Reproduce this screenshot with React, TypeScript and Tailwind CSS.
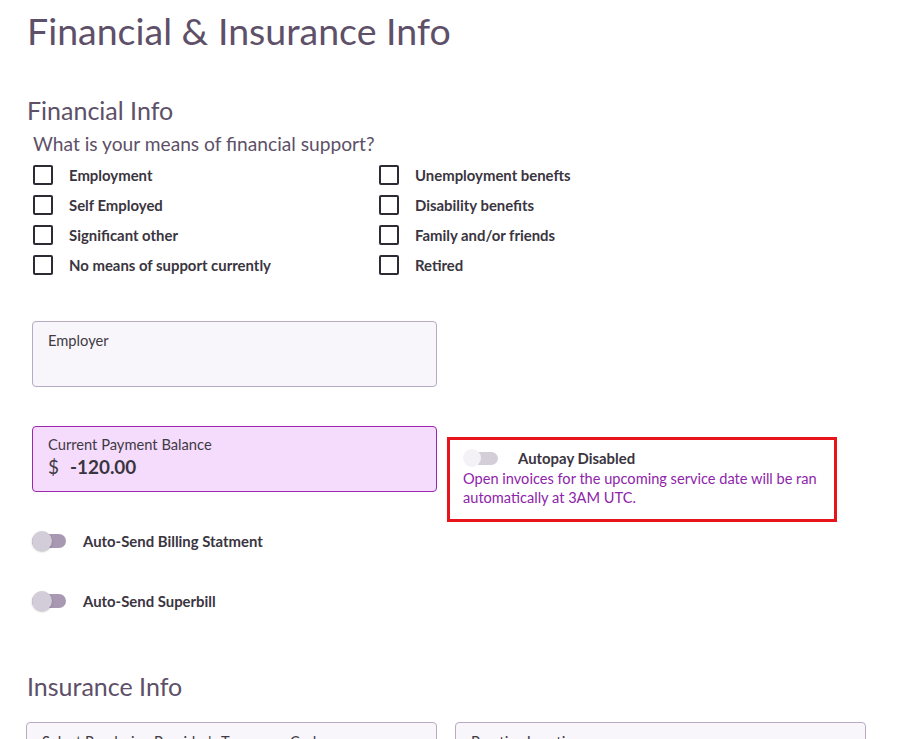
import React from 'react';

const leftOptions = ['Employment', 'Self Employed', 'Significant other', 'No means of support currently'];
const rightOptions = ['Unemployment benefts', 'Disability benefits', 'Family and/or friends', 'Retired'];

function Check({ label }: { label: string }) {
  return (
    <label className="flex items-center h-[30px]">
      <span className="w-5 h-5 border-2 border-[#2e2a33] rounded-[2px] shrink-0" />
      <span className="ml-4 text-[14.9px] font-bold text-[#3a3540]">{label}</span>
    </label>
  );
}

function Toggle({ label }: { label: string }) {
  return (
    <div className="flex items-center h-5">
      <div className="relative w-[35px] h-5 flex items-center">
        <div className="w-[34px] h-[14px] rounded-full bg-[#a898b2]" />
        <div className="absolute left-0 top-0 w-5 h-5 rounded-full bg-[#d3ccd9] shadow-[0_1px_2px_rgba(0,0,0,0.25)]" />
      </div>
      <span className="ml-4 text-[14.9px] font-bold text-[#3a3540]">{label}</span>
    </div>
  );
}

export default function App() {
  return (
    <div className="bg-white h-[739px] overflow-hidden font-['Lato','Noto_Sans',sans-serif] text-[#3a3540]">
      <div className="pl-[27px] pt-[9px]">
        <h1 className="text-[37.5px] leading-[44px] text-[#5d5068]">Financial &amp; Insurance Info</h1>

        {/* Financial Info */}
        <h2 className="mt-[42px] text-[25px] leading-[30px] text-[#5d5068]">Financial Info</h2>
        <p className="mt-[7px] ml-[6px] text-[19.2px] leading-[24px] text-[#5d5068]">What is your means of financial support?</p>

        <div className="ml-[6px] mt-[4px] grid grid-cols-[346px_1fr]">
          <div>
            {leftOptions.map((o) => (
              <Check key={o} label={o} />
            ))}
          </div>
          <div>
            {rightOptions.map((o) => (
              <Check key={o} label={o} />
            ))}
          </div>
        </div>

        <div className="ml-[5px] mt-[41px] w-[405px] h-[66px] rounded-[4px] border border-[#b9aac4] bg-[#f8f6fa] px-[15px] pt-[9px]">
          <div className="text-[14.7px] leading-[18px] text-[#3f3a45]">Employer</div>
        </div>

        <div className="ml-[5px] mt-[39px] flex items-start">
          <div className="w-[405px] h-[66px] rounded-[4px] border border-[#9c27b0] bg-[#f5dcfc] px-[15px] pt-[8px]">
            <div className="text-[14.7px] leading-[18px] text-[#3f3a45]">Current Payment Balance</div>
            <div className="mt-[2px] flex items-baseline text-[18.9px] leading-[24px]">
              <span className="text-[#3f3a45]">$</span>
              <span className="ml-[11px] font-bold text-[#3a3540]">-120.00</span>
            </div>
          </div>

          <div className="ml-[10px] mt-[11px] w-[390px] h-[85px] border-[3px] border-[#e8141c] pl-[13px] pt-[10px]">
            <div className="flex items-center h-4">
              <div className="relative w-[35px] h-4 flex items-center">
                <div className="ml-[2px] w-[33px] h-[13px] rounded-full bg-[#d4ced9]" />
                <div className="absolute left-0 top-[-1px] w-[18px] h-[18px] rounded-full bg-[#f4f2f6]" />
              </div>
              <span className="ml-5 text-[14.9px] font-bold text-[#3a3540]">Autopay Disabled</span>
            </div>
            <p className="mt-[3px] text-[14.6px] leading-[19px] text-[#8e24aa]">
              Open invoices for the upcoming service date will be ran
              <br />
              automatically at 3AM UTC.
            </p>
          </div>
        </div>

        <div className="ml-[5px] mt-[9px]">
          <Toggle label="Auto-Send Billing Statment" />
        </div>
        <div className="ml-[5px] mt-[40px]">
          <Toggle label="Auto-Send Superbill" />
        </div>

        {/* Insurance Info */}
        <h2 className="mt-[60px] text-[25px] leading-[30px] text-[#5d5068]">Insurance Info</h2>

        <div className="mt-[21px] grid grid-cols-[411px_411px] gap-[18px] -ml-px">
          <div className="h-[66px] rounded-[4px] border border-[#b9aac4] bg-[#f8f6fa] px-[15px] pt-[9px]">
            <div className="text-[14.7px] leading-[18px] text-[#3f3a45]">Select Rendering Provider's Taxonomy Code</div>
          </div>
          <div className="h-[66px] rounded-[4px] border border-[#b9aac4] bg-[#f8f6fa] px-[15px] pt-[9px]">
            <div className="text-[14.7px] leading-[18px] text-[#3f3a45]">Practice Location</div>
          </div>
        </div>
      </div>
    </div>
  );
}
